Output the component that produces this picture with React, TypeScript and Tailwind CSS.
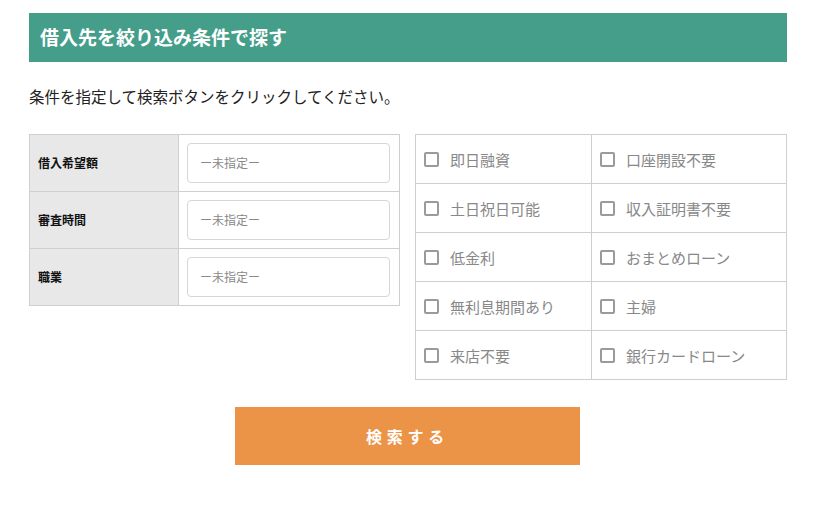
import React from 'react';

const selects = ['借入希望額', '審査時間', '職業'];

const features = [
  ['即日融資', '口座開設不要'],
  ['土日祝日可能', '収入証明書不要'],
  ['低金利', 'おまとめローン'],
  ['無利息期間あり', '主婦'],
  ['来店不要', '銀行カードローン'],
];

const font = { fontFamily: '"Noto Sans CJK JP", "Noto Sans", sans-serif' };

function Check({ label }: { label: string }) {
  return (
    <label className="flex h-full items-center gap-[11px] pl-2">
      <span className="box-border h-[15px] w-[15px] shrink-0 rounded-[2px] border-2 border-[#9a9a9a] bg-white" />
      <span className="text-[15px] leading-none text-[#888]">{label}</span>
    </label>
  );
}

export default function App() {
  return (
    <div className="min-h-[524px] bg-white pt-[13px]" style={font}>
      <div className="mx-[29px] w-[758px]">
        {/* Title bar */}
        <div className="flex h-[49px] items-center bg-[#449e8a] pl-[11px]">
          <h2 className="text-[19px] font-bold text-white">借入先を絞り込み条件で探す</h2>
        </div>

        <p className="mt-6 text-[15.5px] leading-5 text-[#222]">条件を指定して検索ボタンをクリックしてください。</p>

        <div className="mt-7 flex items-start gap-[15px]">
          {/* Select table */}
          <div className="w-[371px] border border-[#cfcfcf]">
            {selects.map((name, i) => (
              <div key={name} className={i > 0 ? 'flex h-[57px] border-t border-[#cfcfcf]' : 'flex h-[56px]'}>
                <div className="flex w-[149px] items-center border-r border-[#cfcfcf] bg-[#e8e8e8] pl-2 text-[12px] font-bold text-[#111]">
                  {name}
                </div>
                <div className="flex flex-1 items-center pl-2 pr-[9px]">
                  <div className="flex h-[40px] w-full items-center rounded-[4px] border border-[#d6d6d6] bg-white pl-[12px] text-[12px] text-[#888]">
                    ー未指定ー
                  </div>
                </div>
              </div>
            ))}
          </div>

          {/* Feature checkboxes */}
          <div className="w-[372px] border border-[#cfcfcf]">
            {features.map((row, i) => (
              <div key={i} className={i > 0 ? 'grid h-[49px] grid-cols-[176px_1fr] border-t border-[#cfcfcf]' : 'grid h-[48px] grid-cols-[176px_1fr]'}>
                <div className="border-r border-[#cfcfcf]">
                  <Check label={row[0]} />
                </div>
                <Check label={row[1]} />
              </div>
            ))}
          </div>
        </div>

        <div className="mt-[27px] flex">
          <button className="ml-[206px] h-[58px] w-[345px] bg-[#eb9448] text-[16px] font-bold tracking-[0.3em] text-white">
            検索する
          </button>
        </div>
      </div>
    </div>
  );
}
